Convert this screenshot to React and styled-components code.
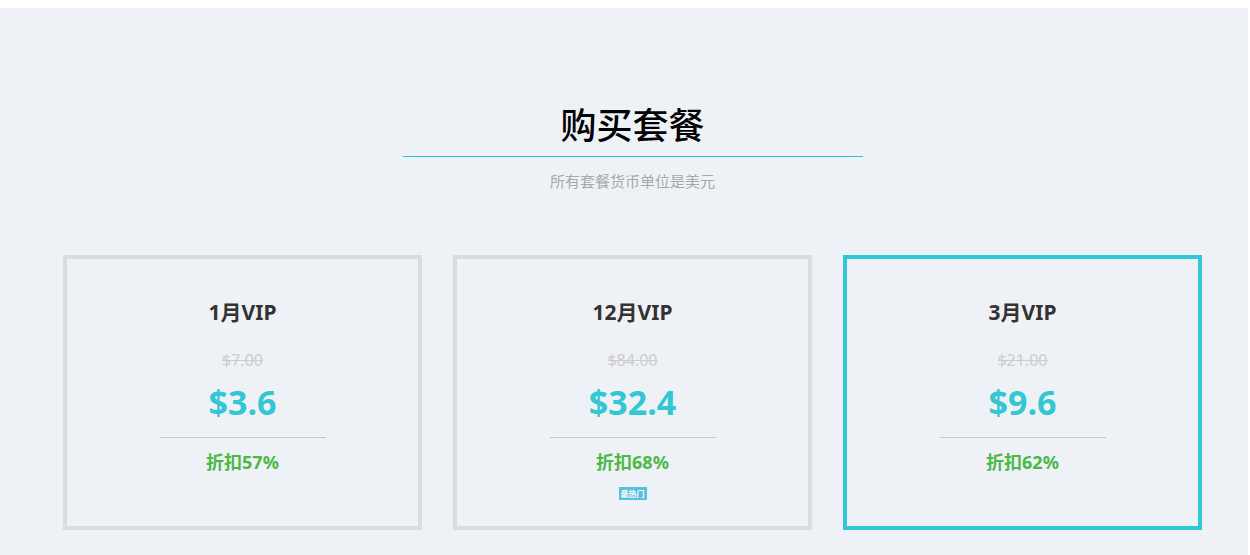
import React from 'react'
import styled, { createGlobalStyle } from 'styled-components'

const plans = [
	{ id: 1, name: '1月VIP', original: '$7.00', price: '$3.6', discount: '折扣57%' },
	{ id: 12, name: '12月VIP', original: '$84.00', price: '$32.4', discount: '折扣68%', hot: true },
	{ id: 3, name: '3月VIP', original: '$21.00', price: '$9.6', discount: '折扣62%', active: true },
]

const GlobalStyle = createGlobalStyle`
	html, body {
		margin: 0;
		padding: 0;
		background: #ffffff;
	}
	body {
		font-family: "Noto Sans", "Noto Sans CJK SC", sans-serif;
	}
`

const App = () => {
	return (
		<>
			<GlobalStyle />
			<Page>
				<Container>
					<Heading>
						<h2>购买套餐</h2>
					</Heading>
					<Subtitle>所有套餐货币单位是美元</Subtitle>
					<Plans>
						{plans.map((plan) => {
							return (
								<Card key={plan.id} $active={plan.active}>
									<PlanName>{plan.name}</PlanName>
									<Original>{plan.original}</Original>
									<Price>{plan.price}</Price>
									<Divider />
									<Discount>{plan.discount}</Discount>
									{plan.hot && <Badge>最热门</Badge>}
								</Card>
							)
						})}
					</Plans>
				</Container>
			</Page>
		</>
	)
}

const Page = styled.div`
	margin-top: 8px;
	margin-right: 2px;
	min-height: 547px;
	background: #eef2f7;
	padding-top: 91px;
	box-sizing: border-box;
`

const Container = styled.div`
	width: 1139px;
	margin-left: 63px;
`

const Heading = styled.div`
	width: 460px;
	margin: 0 auto;
	border-bottom: 1px solid #2ec6d6;
	text-align: center;
	h2 {
		margin: 0;
		padding-bottom: 9px;
		font-family: "Noto Sans CJK SC", sans-serif;
		font-size: 36px;
		font-weight: 500;
		line-height: 48px;
		color: #000;
	}
`

const Subtitle = styled.p`
	margin: 14px 0 0;
	text-align: center;
	font-family: "Noto Sans CJK SC", sans-serif;
	font-size: 15px;
	line-height: 20px;
	color: #a8a8a8;
`

const Plans = styled.div`
	display: grid;
	grid-template-columns: repeat(3, 359px);
	column-gap: 31px;
	margin-top: 64px;
`

const Card = styled.div`
	height: 275px;
	box-sizing: border-box;
	border: 4px solid ${(p) => (p.$active ? '#33c6d3' : '#dcdcdc')};
	display: flex;
	flex-direction: column;
	align-items: center;
	padding-top: 38px;
`

const PlanName = styled.h3`
	margin: 0;
	font-family: "Noto Sans", "Noto Sans CJK SC", sans-serif;
	font-size: 21px;
	font-weight: 700;
	line-height: 30px;
	color: #333;
`

const Original = styled.del`
	margin-top: 22px;
	font-size: 16px;
	line-height: 22px;
	color: #cccccc;
`

const Price = styled.div`
	margin-top: 9px;
	font-size: 34px;
	font-weight: 700;
	line-height: 44px;
	color: #33c6d3;
`

const Divider = styled.hr`
	width: 166px;
	margin: 13px 0 0;
	border: 0;
	border-top: 1px solid #c8c8c8;
`

const Discount = styled.div`
	margin-top: 11px;
	font-family: "Noto Sans", "Noto Sans CJK SC", sans-serif;
	font-size: 18px;
	font-weight: 700;
	line-height: 26px;
	color: #4cb848;
`

const Badge = styled.span`
	margin-top: 12px;
	padding: 0 2px;
	height: 13px;
	line-height: 13px;
	background: #5bc0de;
	color: #fff;
	font-family: "Noto Sans CJK SC", sans-serif;
	font-size: 8px;
	font-weight: 700;
`

export default App
